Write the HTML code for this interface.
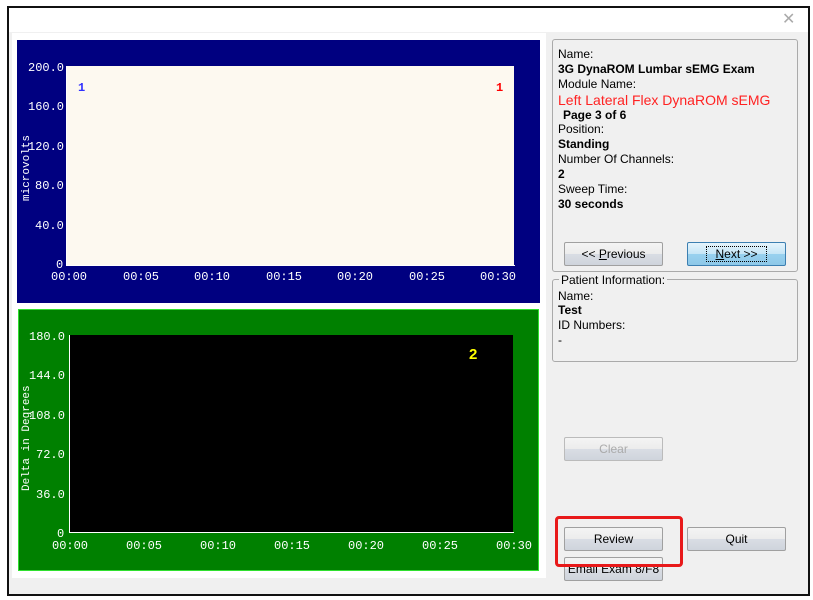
<!DOCTYPE html>
<html><head><style>
body{margin:0;width:813px;height:600px;background:#fff;position:relative;overflow:hidden;font-family:"Liberation Sans",sans-serif;}
.a{position:absolute}
.mono{font-family:"Liberation Mono",monospace;font-size:11px;color:#fff}
.btn{position:absolute;width:97px;height:22px;border:1px solid #a0a0a0;border-radius:2px;background:linear-gradient(#f4f4f4 0,#ececec 50%,#d9dde4 50%,#cfd4dc 100%);font-size:12px;text-align:center;line-height:22px;color:#000}
.t{position:absolute;left:558px;font-size:12px;color:#000}
.b{font-weight:bold}
</style></head><body>
<div class="a" style="left:7px;top:6px;width:799px;height:586px;border:2px solid #111;background:#f0f0f0"></div>
<div class="a" style="left:9px;top:8px;width:799px;height:24px;background:#fff"></div>
<div class="a" style="left:782px;top:9px;font-size:16px;color:#aaa">✕</div>
<div class="a" style="left:12px;top:33px;width:534px;height:545px;background:#fff"></div>
<!-- blue chart -->
<div class="a" style="left:17px;top:40px;width:523px;height:263px;background:#000080"></div>
<div class="a" style="left:67px;top:66px;width:447px;height:199px;background:#fdf9f0"></div>
<div class="a" style="left:66px;top:66px;width:1px;height:200px;background:#fff"></div>
<div class="a" style="left:66px;top:265px;width:449px;height:1px;background:#fff"></div>
<div class="a mono" style="left:78px;top:81px;color:#3030ff;font-weight:bold;font-size:12px">1</div>
<div class="a mono" style="left:496px;top:81px;color:#f00;font-weight:bold;font-size:12px">1</div>
<div class="a mono" style="left:28px;top:61px;font-size:12px">200.0</div>
<div class="a mono" style="left:28px;top:100px;font-size:12px">160.0</div>
<div class="a mono" style="left:28px;top:140px;font-size:12px">120.0</div>
<div class="a mono" style="left:35px;top:179px;font-size:12px">80.0</div>
<div class="a mono" style="left:35px;top:219px;font-size:12px">40.0</div>
<div class="a mono" style="left:56px;top:258px;font-size:12px">0</div>
<div class="a mono" style="top:201px;left:21px;transform:rotate(-90deg);transform-origin:left top">microvolts</div>
<div class="a mono" style="left:51px;top:270px;font-size:12px">
<span class="a" style="left:0">00:00</span><span class="a" style="left:72px">00:05</span><span class="a" style="left:143px">00:10</span><span class="a" style="left:215px">00:15</span><span class="a" style="left:286px">00:20</span><span class="a" style="left:358px">00:25</span><span class="a" style="left:429px">00:30</span></div>
<!-- green chart -->
<div class="a" style="left:18px;top:309px;width:519px;height:260px;background:#008000;border:1px solid #30e030"></div>
<div class="a" style="left:70px;top:335px;width:443px;height:197px;background:#000"></div>
<div class="a" style="left:69px;top:335px;width:1px;height:198px;background:#fff"></div>
<div class="a" style="left:69px;top:532px;width:445px;height:1px;background:#fff"></div>
<div class="a" style="left:469px;top:346px;color:#ff0;font-weight:bold;font-size:15px">2</div>
<div class="a mono" style="left:29px;top:330px;font-size:12px">180.0</div>
<div class="a mono" style="left:29px;top:369px;font-size:12px">144.0</div>
<div class="a mono" style="left:29px;top:409px;font-size:12px">108.0</div>
<div class="a mono" style="left:36px;top:448px;font-size:12px">72.0</div>
<div class="a mono" style="left:36px;top:488px;font-size:12px">36.0</div>
<div class="a mono" style="left:57px;top:527px;font-size:12px">0</div>
<div class="a mono" style="left:21px;top:491px;transform:rotate(-90deg);transform-origin:left top">Delta in Degrees</div>
<div class="a mono" style="left:52px;top:539px;font-size:12px">
<span class="a" style="left:0">00:00</span><span class="a" style="left:74px">00:05</span><span class="a" style="left:148px">00:10</span><span class="a" style="left:222px">00:15</span><span class="a" style="left:296px">00:20</span><span class="a" style="left:370px">00:25</span><span class="a" style="left:444px">00:30</span></div>
<!-- right panel -->
<div class="a" style="left:552px;top:39px;width:244px;height:231px;border:1px solid #aaa;border-radius:3px"></div>
<div class="t" style="top:47px">Name:</div>
<div class="t b" style="top:62px">3G DynaROM Lumbar sEMG Exam</div>
<div class="t" style="top:77px">Module Name:</div>
<div class="t" style="top:92px;color:#f22;font-size:14px">Left Lateral Flex DynaROM sEMG</div>
<div class="t b" style="top:108px;left:563px">Page 3 of 6</div>
<div class="t" style="top:122px">Position:</div>
<div class="t b" style="top:137px">Standing</div>
<div class="t" style="top:152px">Number Of Channels:</div>
<div class="t b" style="top:167px">2</div>
<div class="t" style="top:182px">Sweep Time:</div>
<div class="t b" style="top:197px">30 seconds</div>
<div class="btn" style="left:564px;top:242px">&lt;&lt; <u>P</u>revious</div>
<div class="btn" style="left:687px;top:242px;border-color:#3c7fb1;background:linear-gradient(#e5f4fc 0,#c4e5f6 50%,#98d1ef 50%,#8ec8e8 100%)"><span style="outline:1px dotted #000;padding:0 8px"><u>N</u>ext &gt;&gt;</span></div>
<div class="a" style="left:552px;top:279px;width:244px;height:81px;border:1px solid #aaa;border-radius:3px"></div>
<div class="t" style="top:273px;left:559px;background:#f0f0f0;padding:0 2px">Patient Information:</div>
<div class="t" style="top:289px">Name:</div>
<div class="t b" style="top:303px">Test</div>
<div class="t" style="top:318px">ID Numbers:</div>
<div class="t" style="top:333px">-</div>
<div class="btn" style="left:564px;top:437px;color:#aaa;border-color:#bbb">Clear</div>
<div class="btn" style="left:564px;top:557px">Email Exam 8/F8</div>
<div class="btn" style="left:564px;top:527px">Review</div>
<div class="btn" style="left:687px;top:527px">Quit</div>
<div class="a" style="left:555px;top:516px;width:122px;height:45px;border:3px solid #e8191a;border-radius:4px"></div>
</body></html>
